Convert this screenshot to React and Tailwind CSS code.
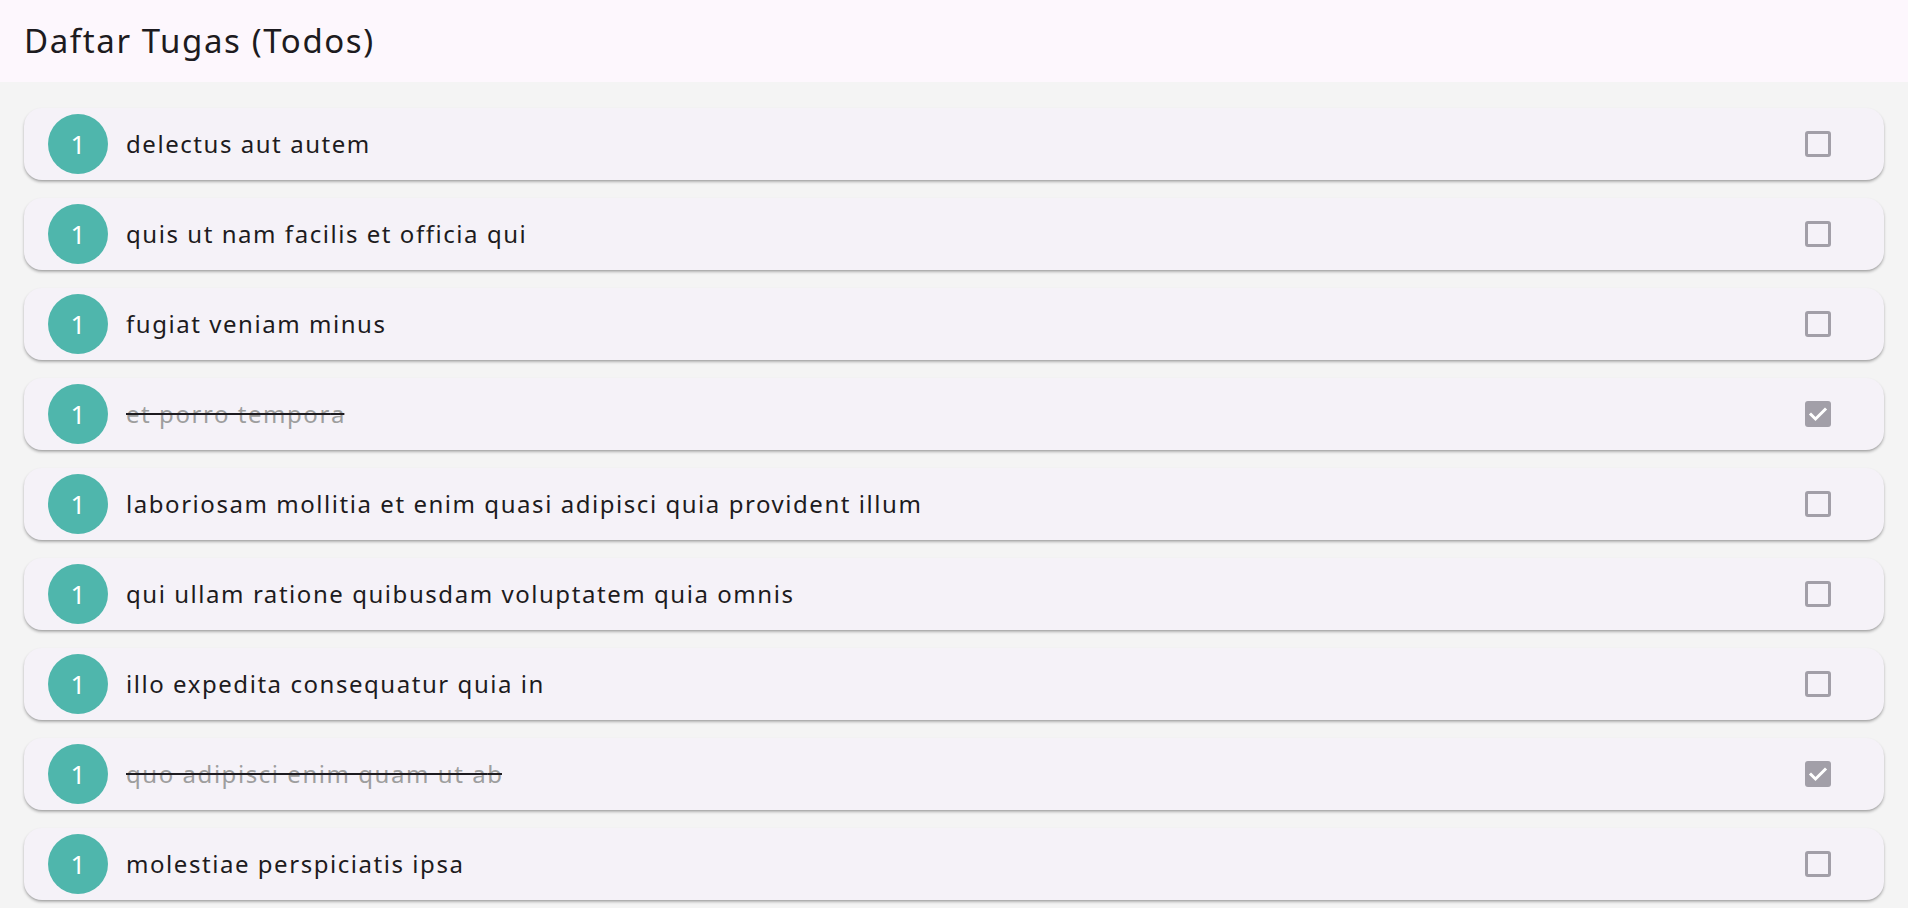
import React from "react";

const todos = [
  { title: "delectus aut autem", done: false },
  { title: "quis ut nam facilis et officia qui", done: false },
  { title: "fugiat veniam minus", done: false },
  { title: "et porro tempora", done: true },
  { title: "laboriosam mollitia et enim quasi adipisci quia provident illum", done: false },
  { title: "qui ullam ratione quibusdam voluptatem quia omnis", done: false },
  { title: "illo expedita consequatur quia in", done: false },
  { title: "quo adipisci enim quam ut ab", done: true },
  { title: "molestiae perspiciatis ipsa", done: false },
];

function Check({ done }) {
  if (done) {
    return (
      <div className="w-[26px] h-[26px] rounded-[3px] bg-[#a29fa8] flex items-center justify-center">
        <svg width="24" height="24" viewBox="0 0 24 24">
          <path d="M5 12.5l4.5 4.5 9.5-9.5" fill="none" stroke="white" strokeWidth="3" strokeLinecap="square" />
        </svg>
      </div>
    );
  }
  return <div className="w-[26px] h-[26px] rounded-[3px] border-[3px] border-[#a29fa8]" />;
}

export default function App() {
  return (
    <div
      className="w-[1908px] h-[908px] overflow-hidden bg-[#f4f4f4] flex flex-col"
      style={{ fontFamily: '"Noto Sans", "Open Sans", sans-serif' }}
    >
      <div className="h-[82px] shrink-0 bg-[#fdf7fd] flex items-center pl-[24px]">
        <h1 className="text-[33px] text-[#1d1b20] font-normal tracking-[1.6px]">Daftar Tugas (Todos)</h1>
      </div>
      <div className="flex flex-col gap-[18px] pt-[26px] px-[24px]">
        {todos.map((t, i) => (
          <div
            key={i}
            className="h-[72px] shrink-0 rounded-[18px] bg-[#f5f2f8] flex items-center pl-[24px] pr-[53px] shadow-[0_2px_3px_rgba(0,0,0,0.28),0_1px_1px_rgba(0,0,0,0.06)]"
          >
            <div className="w-[60px] h-[60px] rounded-full bg-[#4fb6ac] flex items-center justify-center text-white text-[26px]">
              1
            </div>
            <div className="ml-[18px] flex-1 text-[24px] tracking-[1.55px]">
              <span
                className={
                  "inline-block " +
                  (t.done
                    ? "text-[#9e9e9e] line-through decoration-[#1d1b20] decoration-[1.5px]"
                    : "text-[#1d1b20]")
                }
              >
                {t.title.slice(0, -1)}
                <span className="tracking-[0px]">{t.title.slice(-1)}</span>
              </span>
            </div>
            <Check done={t.done} />
          </div>
        ))}
      </div>
    </div>
  );
}
